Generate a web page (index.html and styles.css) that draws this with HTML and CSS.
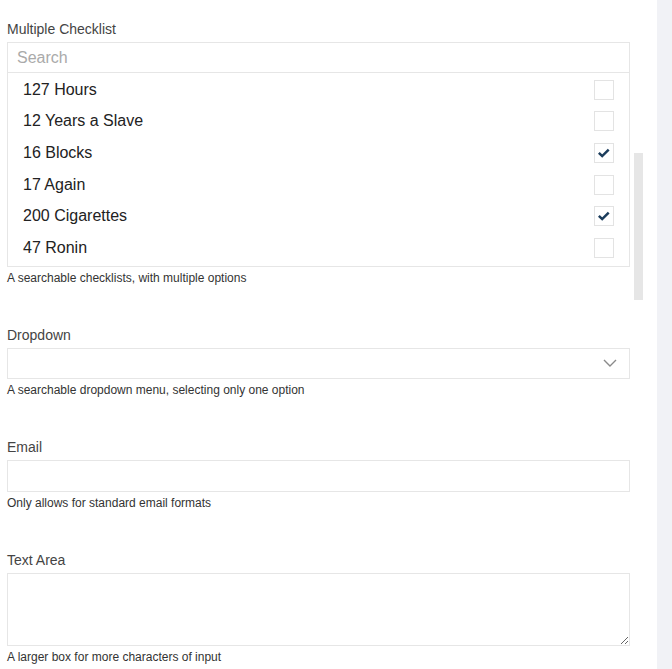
FILE: index.html
```html
<!DOCTYPE html>
<html>
<head>
<meta charset="utf-8">
<link rel="stylesheet" href="styles.css">
</head>
<body>
<div class="page">
  <main class="main">
    <section class="field">
      <div class="label">Multiple Checklist</div>
      <div class="checklist">
        <input class="search" type="text" placeholder="Search">
        <ul class="options">
          <li class="option"><span>127 Hours</span><span class="box"></span></li>
          <li class="option"><span>12 Years a Slave</span><span class="box"></span></li>
          <li class="option"><span>16 Blocks</span><span class="box"><svg viewBox="0 0 20 20" width="18" height="18"><path d="M4.3 9.8 L8 13.4 L15.2 6.3" fill="none" stroke="#1c3d5c" stroke-width="2.8"/></svg></span></li>
          <li class="option"><span>17 Again</span><span class="box"></span></li>
          <li class="option"><span>200 Cigarettes</span><span class="box"><svg viewBox="0 0 20 20" width="18" height="18"><path d="M4.3 9.8 L8 13.4 L15.2 6.3" fill="none" stroke="#1c3d5c" stroke-width="2.8"/></svg></span></li>
          <li class="option"><span>47 Ronin</span><span class="box"></span></li>
        </ul>
      </div>
      <div class="help">A searchable checklists, with multiple options</div>
    </section>

    <section class="field">
      <div class="label">Dropdown</div>
      <div class="dropdown">
        <svg class="chevron" viewBox="0 0 14 9" width="14" height="9"><path d="M1 1 L7 7 L13 1" fill="none" stroke="#8a8a8a" stroke-width="1.4"/></svg>
      </div>
      <div class="help">A searchable dropdown menu, selecting only one option</div>
    </section>

    <section class="field">
      <div class="label">Email</div>
      <input class="email" type="email">
      <div class="help">Only allows for standard email formats</div>
    </section>

    <section class="field">
      <div class="label">Text Area</div>
      <textarea class="textarea"></textarea>
      <div class="help">A larger box for more characters of input</div>
    </section>

    <div class="scroll-thumb"></div>
  </main>
  <aside class="side"></aside>
</div>
</body>
</html>
```

FILE: styles.css
```css
html, body {
  margin: 0;
  padding: 0;
  background: #ffffff;
  font-family: "Liberation Sans", Arial, sans-serif;
}

.page {
  display: flex;
  height: 669px;
  overflow: hidden;
}

.main {
  position: relative;
  width: 657px;
  flex: none;
  padding: 21px 0 0 7px;
  box-sizing: border-box;
  background: #ffffff;
}

.side {
  flex: 1;
  background: #f1f2f6;
}

.field {
  width: 623px;
  margin-bottom: 39px;
}

.label {
  font-size: 14px;
  line-height: 16px;
  color: #444444;
  margin-bottom: 5px;
}

.help {
  font-size: 12px;
  line-height: 20px;
  padding-top: 1px;
  color: #333333;
}

.checklist {
  border: 1px solid #e6e6e6;
  box-sizing: border-box;
}

.search {
  display: block;
  width: 100%;
  box-sizing: border-box;
  height: 30px;
  margin: 0;
  border: none;
  border-bottom: 1px solid #e6e6e6;
  padding: 0 9px;
  font-family: "Liberation Sans", Arial, sans-serif;
  font-size: 16px;
  color: #222;
  outline: none;
}

.search::placeholder {
  color: #aaaaaa;
}

.options {
  list-style: none;
  margin: 0;
  padding: 1px 0 2px 0;
}

.option {
  display: flex;
  align-items: center;
  justify-content: space-between;
  height: 31.6px;
  padding: 0 15px 0 15px;
  font-size: 16px;
  color: #222222;
}

.box {
  width: 20px;
  height: 20px;
  box-sizing: border-box;
  border: 1px solid #e3e3e3;
  display: flex;
  align-items: center;
  justify-content: center;
}

.box svg {
  display: block;
}

.dropdown {
  height: 31px;
  border: 1px solid #e6e6e6;
  box-sizing: border-box;
  display: flex;
  align-items: center;
  justify-content: flex-end;
  padding-right: 12px;
}

.chevron {
  display: block;
}

.email {
  display: block;
  width: 100%;
  height: 32px;
  box-sizing: border-box;
  margin: 0;
  border: 1px solid #e6e6e6;
  outline: none;
  font-family: "Liberation Sans", Arial, sans-serif;
  font-size: 14px;
}

.textarea {
  display: block;
  width: 100%;
  height: 73px;
  box-sizing: border-box;
  margin: 0;
  border: 1px solid #e6e6e6;
  outline: none;
  resize: vertical;
  font-family: "Liberation Sans", Arial, sans-serif;
  font-size: 14px;
}

.scroll-thumb {
  position: absolute;
  left: 634px;
  top: 153px;
  width: 9px;
  height: 147px;
  background: #e6e6e6;
}
```
